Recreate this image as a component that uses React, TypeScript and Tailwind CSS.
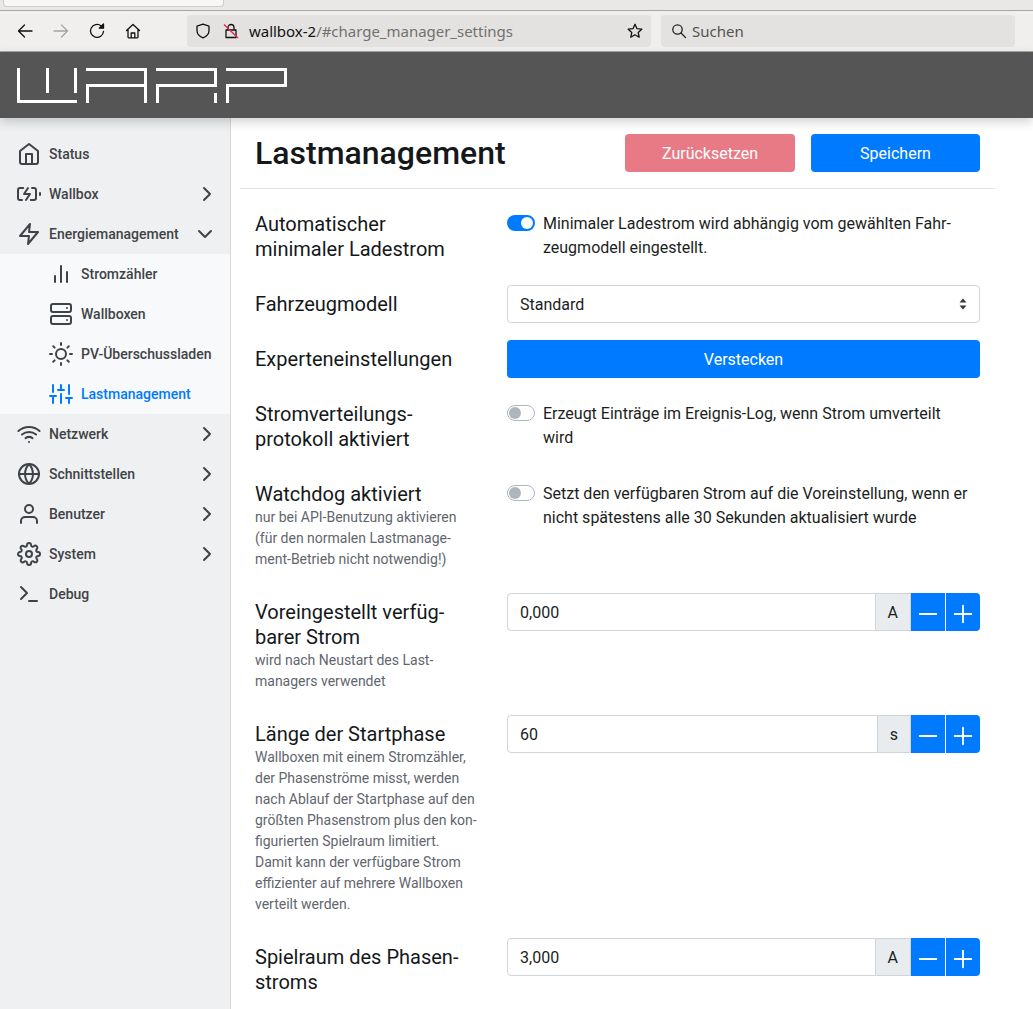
import React from "react";

const I = ({ children, className = "" }: { children: React.ReactNode; className?: string }) => (
  <svg
    viewBox="0 0 24 24"
    fill="none"
    stroke="currentColor"
    strokeWidth={2}
    strokeLinecap="round"
    strokeLinejoin="round"
    className={"w-6 h-6 shrink-0 " + className}
  >
    {children}
  </svg>
);

const Home = () => (
  <I>
    <path d="M3 9l9-7 9 7v11a2 2 0 0 1-2 2H5a2 2 0 0 1-2-2z" />
    <polyline points="9 22 9 12 15 12 15 22" />
  </I>
);
const Battery = () => (
  <I>
    <path d="M5 18H3a2 2 0 0 1-2-2V8a2 2 0 0 1 2-2h3.19M15 6h2a2 2 0 0 1 2 2v8a2 2 0 0 1-2 2h-3.19" />
    <line x1="23" y1="13" x2="23" y2="11" />
    <polyline points="11 6 7 12 13 12 9 18" />
  </I>
);
const Zap = () => (
  <I>
    <polygon points="13 2 3 14 12 14 11 22 21 10 12 10 13 2" />
  </I>
);
const Bars = () => (
  <I>
    <line x1="18" y1="20" x2="18" y2="10" />
    <line x1="12" y1="20" x2="12" y2="4" />
    <line x1="6" y1="20" x2="6" y2="14" />
  </I>
);
const Server = () => (
  <I>
    <rect x="2" y="2" width="20" height="8" rx="2" ry="2" />
    <rect x="2" y="14" width="20" height="8" rx="2" ry="2" />
    <line x1="18" y1="6" x2="18.01" y2="6" />
    <line x1="18" y1="18" x2="18.01" y2="18" />
  </I>
);
const Sun = () => (
  <I>
    <circle cx="12" cy="12" r="5" />
    <line x1="12" y1="1" x2="12" y2="3" />
    <line x1="12" y1="21" x2="12" y2="23" />
    <line x1="4.22" y1="4.22" x2="5.64" y2="5.64" />
    <line x1="18.36" y1="18.36" x2="19.78" y2="19.78" />
    <line x1="1" y1="12" x2="3" y2="12" />
    <line x1="21" y1="12" x2="23" y2="12" />
    <line x1="4.22" y1="19.78" x2="5.64" y2="18.36" />
    <line x1="18.36" y1="5.64" x2="19.78" y2="4.22" />
  </I>
);
const Sliders = () => (
  <I>
    <line x1="4" y1="21" x2="4" y2="14" />
    <line x1="4" y1="10" x2="4" y2="3" />
    <line x1="12" y1="21" x2="12" y2="12" />
    <line x1="12" y1="8" x2="12" y2="3" />
    <line x1="20" y1="21" x2="20" y2="16" />
    <line x1="20" y1="12" x2="20" y2="3" />
    <line x1="1" y1="14" x2="7" y2="14" />
    <line x1="9" y1="8" x2="15" y2="8" />
    <line x1="17" y1="16" x2="23" y2="16" />
  </I>
);
const Wifi = () => (
  <I>
    <path d="M5 12.55a11 11 0 0 1 14.08 0" />
    <path d="M1.42 9a16 16 0 0 1 21.16 0" />
    <path d="M8.53 16.11a6 6 0 0 1 6.95 0" />
    <line x1="12" y1="20" x2="12.01" y2="20" />
  </I>
);
const Globe = () => (
  <I>
    <circle cx="12" cy="12" r="10" />
    <line x1="2" y1="12" x2="22" y2="12" />
    <path d="M12 2a15.3 15.3 0 0 1 4 10 15.3 15.3 0 0 1-4 10 15.3 15.3 0 0 1-4-10 15.3 15.3 0 0 1 4-10z" />
  </I>
);
const User = () => (
  <I>
    <path d="M20 21v-2a4 4 0 0 0-4-4H8a4 4 0 0 0-4 4v2" />
    <circle cx="12" cy="7" r="4" />
  </I>
);
const Gear = () => (
  <I>
    <circle cx="12" cy="12" r="3" />
    <path d="M19.4 15a1.65 1.65 0 0 0 .33 1.82l.06.06a2 2 0 0 1 0 2.83 2 2 0 0 1-2.83 0l-.06-.06a1.65 1.65 0 0 0-1.82-.33 1.65 1.65 0 0 0-1 1.51V21a2 2 0 0 1-2 2 2 2 0 0 1-2-2v-.09A1.65 1.65 0 0 0 9 19.4a1.65 1.65 0 0 0-1.82.33l-.06.06a2 2 0 0 1-2.83 0 2 2 0 0 1 0-2.83l.06-.06a1.65 1.65 0 0 0 .33-1.82 1.65 1.65 0 0 0-1.51-1H3a2 2 0 0 1-2-2 2 2 0 0 1 2-2h.09A1.65 1.65 0 0 0 4.6 9a1.65 1.65 0 0 0-.33-1.82l-.06-.06a2 2 0 0 1 0-2.83 2 2 0 0 1 2.83 0l.06.06a1.65 1.65 0 0 0 1.82.33H9a1.65 1.65 0 0 0 1-1.51V3a2 2 0 0 1 2-2 2 2 0 0 1 2 2v.09a1.65 1.65 0 0 0 1 1.51 1.65 1.65 0 0 0 1.82-.33l.06-.06a2 2 0 0 1 2.83 0 2 2 0 0 1 0 2.83l-.06.06a1.65 1.65 0 0 0-.33 1.82V9a1.65 1.65 0 0 0 1.51 1H21a2 2 0 0 1 2 2 2 2 0 0 1-2 2h-.09a1.65 1.65 0 0 0-1.51 1z" />
  </I>
);
const Terminal = () => (
  <I>
    <polyline points="4 17 10 11 4 5" />
    <line x1="12" y1="19" x2="20" y2="19" />
  </I>
);
const Right = () => (
  <I>
    <polyline points="9 18 15 12 9 6" />
  </I>
);
const Down = () => (
  <I className="mr-[2px]">
    <polyline points="6 9 12 15 18 9" />
  </I>
);

const NavItem = ({
  icon,
  label,
  chevron,
}: {
  icon: React.ReactNode;
  label: string;
  chevron?: "right" | "down";
}) => (
  <div className="h-10 flex items-center pl-[17px] pr-[11px] gap-2 text-[#3f4347]">
    {icon}
    <span className="text-sm font-medium flex-1">{label}</span>
    {chevron === "right" && <Right />}
    {chevron === "down" && <Down />}
  </div>
);

const SubItem = ({ icon, label, active }: { icon: React.ReactNode; label: string; active?: boolean }) => (
  <div className={"h-10 flex items-center pl-[49px] gap-2 " + (active ? "text-[#007bff]" : "text-[#3f4347]")}>
    {icon}
    <span className="text-sm font-medium">{label}</span>
  </div>
);

const Toggle = ({ on }: { on?: boolean }) =>
  on ? (
    <span className="mt-[3px] w-7 h-4 rounded-full bg-[#007bff] flex items-center justify-end pr-[2px] shrink-0">
      <span className="w-3 h-3 rounded-full bg-white" />
    </span>
  ) : (
    <span className="mt-[3px] w-7 h-4 rounded-full bg-white border border-[#adb5bd] flex items-center pl-[1px] shrink-0">
      <span className="w-3 h-3 rounded-full bg-[#adb5bd]" />
    </span>
  );

const Switch = ({ on, children }: { on?: boolean; children: React.ReactNode }) => (
  <div className="flex gap-2 pt-[7px] text-base leading-6 text-[#1b1e21]">
    <Toggle on={on} />
    <span>{children}</span>
  </div>
);

const Muted = ({ children }: { children: React.ReactNode }) => (
  <div className="text-sm leading-[21px] text-[#5f666d]">{children}</div>
);

const Row = ({ label, control }: { label: React.ReactNode; control: React.ReactNode }) => (
  <div className="flex mb-4">
    <div className="w-[252px] shrink-0 pt-[7px] pb-[7px] text-xl leading-[25px] text-[#15181b]">{label}</div>
    <div className="w-[473px] shrink-0">{control}</div>
  </div>
);

const NumberInput = ({ value, unit }: { value: string; unit: string }) => (
  <div className="flex h-[38px] text-base text-[#1b1e21]">
    <div className="flex-1 min-w-0 border border-[#ced4da] rounded-l pl-3 pt-[2px] flex items-center bg-white">{value}</div>
    <div className="px-3 pt-[2px] flex items-center bg-[#e9ecef] border border-l-0 border-[#ced4da]">{unit}</div>
    <div className="w-[34px] pt-1 bg-[#007bff] flex items-center justify-center text-white">
      <I className="w-[22px] h-[22px]">
        <line x1="3" y1="12" x2="21" y2="12" />
      </I>
    </div>
    <div className="w-[35px] pl-px bg-white">
      <div className="h-full pt-1 bg-[#007bff] rounded-r flex items-center justify-center text-white">
        <I className="w-[22px] h-[22px]">
          <line x1="12" y1="3" x2="12" y2="21" />
          <line x1="3" y1="12" x2="21" y2="12" />
        </I>
      </div>
    </div>
  </div>
);

const Logo = () => (
  <svg viewBox="17 68 270 35" className="w-[270px] h-[35px] block" fill="none" stroke="#fff" strokeWidth={3}>
    <path d="M18.5 68V101.5H77M47.5 68V93M75.5 68V93" />
    <path d="M86 69.5H145.5V103M145.5 85.5H87.5V103" />
    <path d="M156 69.5H215.5V85.5H157.5V103M215.5 93V103" />
    <path d="M226 69.5H285.5V85.5H227.5V103" />
  </svg>
);

const Tb = ({ children, className = "" }: { children: React.ReactNode; className?: string }) => (
  <svg
    viewBox="0 0 16 16"
    fill="none"
    stroke="currentColor"
    strokeWidth={1.3}
    strokeLinecap="round"
    strokeLinejoin="round"
    className={"w-4 h-4 shrink-0 " + className}
  >
    {children}
  </svg>
);

const Toolbar = () => (
  <div className="h-[41px] bg-[#f0efed] border-b border-[#a9a7a4] flex items-start shrink-0 font-['Noto_Sans',sans-serif]">
    <div className="w-[187px] h-10 flex items-center pl-[17px] gap-5 text-[#111]">
      <Tb>
        <path d="M15 8H1.5M7.5 2L1.5 8l6 6" />
      </Tb>
      <Tb className="text-[#a5a5a5]">
        <path d="M1 8h13.5M8.5 2l6 6-6 6" />
      </Tb>
      <Tb>
        <path d="M14.5 8.5A6.5 6.5 0 1 1 12 2.8" />
        <path d="M14.5 1v4.2h-4.2z" fill="currentColor" />
      </Tb>
      <Tb>
        <path d="M1.5 7.5L8 1.5l6.5 6M3 6.5V14a.8.8 0 0 0 .8.8h8.4A.8.8 0 0 0 13 14V6.5M6.2 14.8V10h3.6v4.8" />
      </Tb>
    </div>
    <div className="mt-1 w-[464px] h-8 rounded bg-[#e3e2e0] flex items-center pl-2 pr-2 text-[#111]">
      <Tb>
        <path d="M8 1.2l6 2v4.3c0 3.5-2.5 6-6 7.3-3.5-1.3-6-3.8-6-7.3V3.2z" />
      </Tb>
      <span className="relative w-4 h-4 ml-[12px] shrink-0">
        <Tb>
          <path d="M5 7V4.5a3 3 0 0 1 6 0V7M3 7h10v7.5H3z" />
        </Tb>
        <svg viewBox="0 0 16 16" className="absolute inset-0 w-4 h-4">
          <line x1="1" y1="1.5" x2="15" y2="15" stroke="#e22850" strokeWidth={1.3} />
        </svg>
      </span>
      <span className="ml-[10px] flex-1 text-[15px] tracking-[-0.02px]">
        wallbox-2<span className="text-[#72716f]">/#charge_manager_settings</span>
      </span>
      <Tb>
        <path d="M8 1.3l2 4.4 4.8.5-3.6 3.2 1 4.8L8 11.8l-4.2 2.4 1-4.8L1.2 6.2 6 5.7z" />
      </Tb>
    </div>
    <div className="mt-1 ml-[10px] w-[354px] h-8 rounded bg-[#e3e2e0] flex items-center pl-[10px] text-[#55534f]">
      <Tb className="text-[#222]">
        <circle cx="6.5" cy="6.5" r="4.7" />
        <line x1="10" y1="10" x2="14.5" y2="14.5" />
      </Tb>
      <span className="ml-[5px] text-[15px]">Suchen</span>
    </div>
  </div>
);

const Btn = ({ w, bg, children }: { w: string; bg: string; children: string }) => (
  <div className={"h-[38px] pt-[2px] rounded flex items-center justify-center text-base text-white " + w + " " + bg}>{children}</div>
);

export default function App() {
  return (
    <div className="w-[1033px] h-[1009px] overflow-hidden flex flex-col bg-white font-['Roboto',sans-serif]">
      <div className="h-[11px] bg-[#e9e8e6] border-b border-[#a9a7a4] shrink-0">
        <div className="ml-[3px] w-[221px] h-[7px] bg-[#f7f7f6] border border-t-0 border-[#cfcdca] rounded-b" />
      </div>
      <Toolbar />
      <div className="h-[66px] bg-[#555555] shrink-0 pl-[17px] pt-4 relative z-10 shadow-[0_4px_10px_rgba(0,0,0,0.18)]">
        <Logo />
      </div>
      <div className="flex flex-1 min-h-0">
        <div className="w-[231px] shrink-0 bg-[#eff0f2] border-r border-[#d9d9d9] pt-4">
          <NavItem icon={<Home />} label="Status" />
          <NavItem icon={<Battery />} label="Wallbox" chevron="right" />
          <NavItem icon={<Zap />} label="Energiemanagement" chevron="down" />
          <div className="bg-[#f8f9fa]">
            <SubItem icon={<Bars />} label="Stromzähler" />
            <SubItem icon={<Server />} label="Wallboxen" />
            <SubItem icon={<Sun />} label="PV-Überschussladen" />
            <SubItem icon={<Sliders />} label="Lastmanagement" active />
          </div>
          <NavItem icon={<Wifi />} label="Netzwerk" chevron="right" />
          <NavItem icon={<Globe />} label="Schnittstellen" chevron="right" />
          <NavItem icon={<User />} label="Benutzer" chevron="right" />
          <NavItem icon={<Gear />} label="System" chevron="right" />
          <NavItem icon={<Terminal />} label="Debug" />
        </div>
        <div className="ml-[9px] w-[755px] shrink-0">
          <div className="px-[15px] py-4 flex items-center border-b border-[#dee2e6]">
            <h1 className="text-[32px] font-medium leading-[38px] text-[#15181b] flex-1">Lastmanagement</h1>
            <div className="flex gap-4">
              <Btn w="w-[170px]" bg="bg-[#e87a86]">Zurücksetzen</Btn>
              <Btn w="w-[169px]" bg="bg-[#007bff]">Speichern</Btn>
            </div>
          </div>
          <div className="px-[15px] pt-4">
            <Row
              label={<>Automatischer<br />minimaler Ladestrom</>}
              control={
                <Switch on>
                  Minimaler Ladestrom wird abhängig vom gewählten Fahr-<br />zeugmodell eingestellt.
                </Switch>
              }
            />
            <Row
              label="Fahrzeugmodell"
              control={
                <div className="h-[38px] border border-[#ced4da] rounded pl-3 pr-[12px] flex items-center justify-between text-base text-[#1b1e21] bg-white">
                  <span className="pt-[2px]">Standard</span>
                  <svg viewBox="0 0 8 12" className="w-2 h-3 fill-[#343a40]">
                    <path d="M4 0.5L7.5 4.5H0.5zM4 11.5L0.5 7.5H7.5z" />
                  </svg>
                </div>
              }
            />
            <Row
              label="Experteneinstellungen"
              control={
                <div className="h-[38px] pt-[2px] rounded bg-[#007bff] flex items-center justify-center text-base text-white">Verstecken</div>
              }
            />
            <Row
              label={<>Stromverteilungs-<br />protokoll aktiviert</>}
              control={
                <Switch>
                  Erzeugt Einträge im Ereignis-Log, wenn Strom umverteilt<br />wird
                </Switch>
              }
            />
            <Row
              label={
                <>
                  Watchdog aktiviert
                  <Muted>
                    nur bei API-Benutzung aktivieren<br />(für den normalen Lastmanage-<br />ment-Betrieb nicht notwendig!)
                  </Muted>
                </>
              }
              control={
                <Switch>
                  Setzt den verfügbaren Strom auf die Voreinstellung, wenn er<br />nicht spätestens alle 30 Sekunden aktualisiert wurde
                </Switch>
              }
            />
            <Row
              label={
                <>
                  Voreingestellt verfüg-<br />barer Strom
                  <Muted>
                    wird nach Neustart des Last-<br />managers verwendet
                  </Muted>
                </>
              }
              control={<NumberInput value="0,000" unit="A" />}
            />
            <Row
              label={
                <>
                  Länge der Startphase
                  <Muted>
                    Wallboxen mit einem Stromzähler,<br />der Phasenströme misst, werden<br />nach Ablauf der Startphase auf den<br />größten Phasenstrom plus den kon-<br />figurierten Spielraum limitiert.<br />Damit kann der verfügbare Strom<br />effizienter auf mehrere Wallboxen<br />verteilt werden.
                  </Muted>
                </>
              }
              control={<NumberInput value="60" unit="s" />}
            />
            <Row
              label={<>Spielraum des Phasen-<br />stroms</>}
              control={<NumberInput value="3,000" unit="A" />}
            />
          </div>
        </div>
      </div>
    </div>
  );
}
